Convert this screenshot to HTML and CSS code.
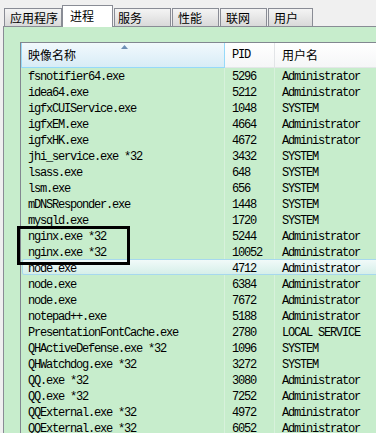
FILE: index.html
```html
<!DOCTYPE html>
<html lang="zh-CN">
<head>
    <meta charset="UTF-8">
    <meta name="viewport" content="width=device-width, initial-scale=1.0">
    <link rel="stylesheet" href="styles.css">
</head>
<body>
    <div class="tabs">
        <div class="tab tab-apps">应用程序</div>
        <div class="tab active">进程</div>
        <div class="tab tab-services">服务</div>
        <div class="tab tab-perf">性能</div>
        <div class="tab tab-net">联网</div>
        <div class="tab tab-users">用户</div>
    </div>
    <div class="panel">
        <div class="list">
            <div class="head">
                <div class="col sorted">映像名称
                    <svg class="sort-arrow" width="7" height="4" viewBox="0 0 7 4"><path d="M0 4 L3.5 0 L7 4 Z" fill="#6d8fb5"/></svg>
                </div>
                <div class="col latin">PID</div>
                <div class="col">用户名</div>
            </div>
            <div class="row"><div>fsnotifier64.exe</div><div>5296</div><div>Administrator</div></div>
            <div class="row"><div>idea64.exe</div><div>5212</div><div>Administrator</div></div>
            <div class="row"><div>igfxCUIService.exe</div><div>1048</div><div>SYSTEM</div></div>
            <div class="row"><div>igfxEM.exe</div><div>4664</div><div>Administrator</div></div>
            <div class="row"><div>igfxHK.exe</div><div>4672</div><div>Administrator</div></div>
            <div class="row"><div>jhi_service.exe *32</div><div>3432</div><div>SYSTEM</div></div>
            <div class="row"><div>lsass.exe</div><div>648</div><div>SYSTEM</div></div>
            <div class="row"><div>lsm.exe</div><div>656</div><div>SYSTEM</div></div>
            <div class="row"><div>mDNSResponder.exe</div><div>1448</div><div>SYSTEM</div></div>
            <div class="row"><div>mysqld.exe</div><div>1720</div><div>SYSTEM</div></div>
            <div class="row"><div>nginx.exe *32</div><div>5244</div><div>Administrator</div></div>
            <div class="row"><div>nginx.exe *32</div><div>10052</div><div>Administrator</div></div>
            <div class="row hover"><div>node.exe</div><div>4712</div><div>Administrator</div></div>
            <div class="row"><div>node.exe</div><div>6384</div><div>Administrator</div></div>
            <div class="row"><div>node.exe</div><div>7672</div><div>Administrator</div></div>
            <div class="row"><div>notepad++.exe</div><div>5188</div><div>Administrator</div></div>
            <div class="row"><div>PresentationFontCache.exe</div><div>2780</div><div>LOCAL SERVICE</div></div>
            <div class="row"><div>QHActiveDefense.exe *32</div><div>1096</div><div>SYSTEM</div></div>
            <div class="row"><div>QHWatchdog.exe *32</div><div>3272</div><div>SYSTEM</div></div>
            <div class="row"><div>QQ.exe *32</div><div>3080</div><div>Administrator</div></div>
            <div class="row"><div>QQ.exe *32</div><div>7252</div><div>Administrator</div></div>
            <div class="row"><div>QQExternal.exe *32</div><div>4972</div><div>Administrator</div></div>
            <div class="row"><div>QQExternal.exe *32</div><div>6052</div><div>Administrator</div></div>
        </div>
    </div>
    <!-- annotation box drawn over the two nginx rows -->
    <div class="mark"></div>
</body>
</html>
```

FILE: styles.css
```css
body {
    margin: 0;
    height: 433px;
    overflow: hidden;
    position: relative;
    background-color: #f0f0f0;
    font-family: "Noto Sans CJK SC", sans-serif;
    font-size: 12px;
    color: #000;
}

.tabs {
    display: flex;
    align-items: flex-end;
    height: 26px;
    padding-left: 4px;
}

.tab {
    box-sizing: border-box;
    height: 18px;
    line-height: 17px;
    padding-left: 5px;
    margin-right: 1px;
    border: 1px solid #898c95;
    border-bottom: none;
    background: linear-gradient(#f4f4f4, #d9d9d9);
    white-space: nowrap;
}

.tab-apps { width: 58px; margin-right: 0; }
.tab-services { width: 57px; padding-left: 3px; }
.tab-perf { width: 47px; }
.tab-net { width: 47px; }
.tab-users { width: 45px; }

.tab.active {
    position: relative;
    z-index: 1;
    width: 51px;
    height: 22px;
    line-height: 19px;
    padding-left: 7px;
    margin-bottom: -1px;
    background: #fff;
}

.panel {
    margin-left: 3px;
    padding: 15px 0 0 16px;
    height: 433px;
    border-left: 1px solid #898c95;
    border-top: 1px solid #898c95;
    background-color: #c7edcc;
}

.list {
    border-left: 1px solid #828790;
    border-top: 1px solid #828790;
    width: 400px;
}

.head {
    display: grid;
    grid-template-columns: 204px 50px 1fr;
    height: 24px;
}

.head .col {
    position: relative;
    box-sizing: border-box;
    padding-left: 7px;
    line-height: 24px;
    background: linear-gradient(#ffffff, #f5f6f7);
    border-right: 1px solid #e2e4e7;
    border-bottom: 1px solid #e4e6e8;
}

.head .col.sorted {
    padding-left: 6px;
    background: linear-gradient(#f2f9fc 0%, #e6f3fa 45%, #d8ecf6 100%);
    border-left: 1px solid #96d9f9;
    border-right: 1px solid #96d9f9;
    border-bottom: 1px solid #96d9f9;
}

.head .col.latin {
    font-family: "Liberation Mono", monospace;
    letter-spacing: -1.2px;
}

.sort-arrow {
    position: absolute;
    left: 99px;
    top: 2px;
}

.row {
    display: grid;
    grid-template-columns: 204px 50px 1fr;
    height: 16px;
    font-family: "Liberation Mono", "Noto Sans CJK SC", monospace;
    letter-spacing: -1.2px;
    white-space: nowrap;
}

.row div {
    box-sizing: border-box;
    height: 16px;
    padding: 4px 0 0 7px;
    line-height: 12px;
    border-right: 1px solid #d7f1db;
}

.row div:last-child {
    border-right: none;
}

.row.hover {
    box-sizing: border-box;
    margin-left: 1px;
    grid-template-columns: 203px 50px 1fr;
    border: 1px solid #a7d8ee;
    border-radius: 2px;
    background: linear-gradient(#f1faf9, #d6efe9);
}

.row.hover div {
    height: 14px;
    border-right: none;
    padding: 3px 0 0 5px;
}

.row.hover div + div {
    padding-left: 6px;
}

.mark {
    position: absolute;
    left: 17px;
    top: 226px;
    width: 113px;
    height: 39px;
    box-sizing: border-box;
    border: 3px solid #000;
}
```
